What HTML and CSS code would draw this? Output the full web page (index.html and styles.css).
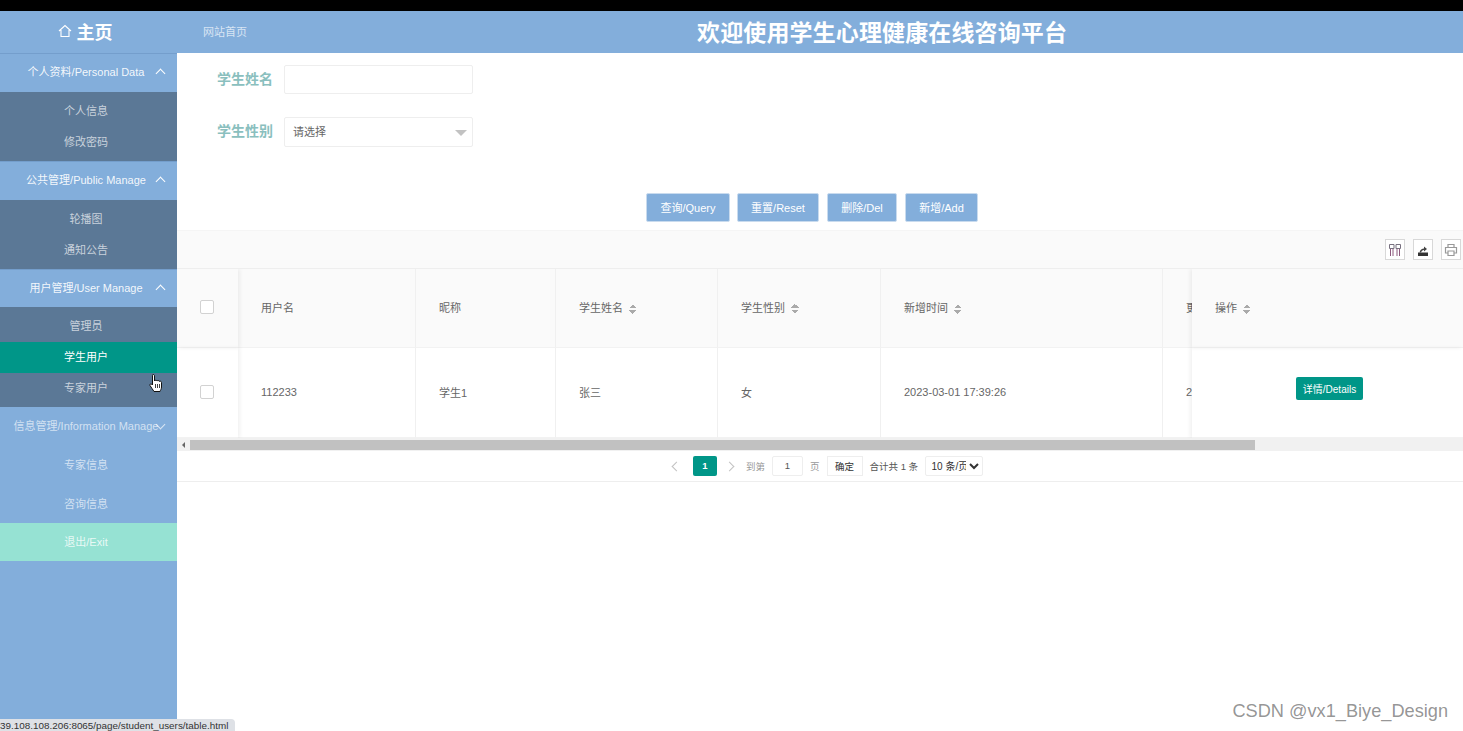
FILE: index.html
```html
<!DOCTYPE html>
<html lang="zh-CN">
<head>
    <meta charset="UTF-8">
    <title>学生心理健康在线咨询平台</title>
    <link rel="stylesheet" href="styles.css">
</head>
<body>
<div class="top-strip"></div>
<header class="header">
    <div class="logo">
        <svg class="home-icon" viewBox="0 0 14 14"><path d="M1 7 7 1.500 13 7M3 6v6.500h8V6" fill="none" stroke="#fff" stroke-width="1.100"/></svg>
        <span>主页</span>
    </div>
    <div class="crumb">网站首页</div>
    <div class="site-title">欢迎使用学生心理健康在线咨询平台</div>
</header>
<div class="main">
    <nav class="sidebar">
        <div class="nav-group">个人资料/Personal Data<span class="chevron up"></span></div>
        <div class="nav-sub">
            <div class="nav-item">个人信息</div>
            <div class="nav-item">修改密码</div>
        </div>
        <div class="nav-group">公共管理/Public Manage<span class="chevron up"></span></div>
        <div class="nav-sub">
            <div class="nav-item">轮播图</div>
            <div class="nav-item">通知公告</div>
        </div>
        <div class="nav-group short">用户管理/User Manage<span class="chevron up"></span></div>
        <div class="nav-sub tall">
            <div class="nav-item">管理员</div>
            <div class="nav-item active">学生用户</div>
            <div class="nav-item">专家用户</div>
        </div>
        <div class="nav-group dim">信息管理/Information Manage<span class="chevron down"></span></div>
        <div class="nav-plain">专家信息</div>
        <div class="nav-plain">咨询信息</div>
        <div class="nav-plain exit">退出/Exit</div>
    </nav>
    <main class="content">
        <div class="search-form">
            <div class="form-row">
                <label class="form-label">学生姓名</label>
                <div class="form-input"></div>
            </div>
            <div class="form-row">
                <label class="form-label">学生性别</label>
                <div class="form-input select-box">请选择<span class="select-arrow"></span></div>
            </div>
        </div>
        <div class="button-group">
            <button class="btn btn-query">查询/Query</button>
            <button class="btn btn-reset">重置/Reset</button>
            <button class="btn btn-del">删除/Del</button>
            <button class="btn btn-add">新增/Add</button>
        </div>
        <div class="toolbar">
            <span class="tool">
                <svg viewBox="0 0 14 14"><path d="M1.500 1.500h4.500v4H1.500zM8 1.500h4.500v4H8z" fill="none" stroke="#77707f"/><path d="M2.500 6v7M5 6v7M9 6v7M11.500 6v7" stroke="#8e5a7e"/></svg>
            </span>
            <span class="tool">
                <svg viewBox="0 0 14 14"><path d="M2 9.500h10V13H2z" fill="#333"/><path d="M3.500 9.500C4 7 6 5.500 8 5.500V3.500l3 2.500-3 2.500V7C6.500 7 5.500 8 5 9.500z" fill="#444"/></svg>
            </span>
            <span class="tool">
                <svg viewBox="0 0 14 14"><path d="M4 4V1.500h6V4M4 10H1.500V4.500h11V10H10M4 8h6v4.500H4z" fill="none" stroke="#999" stroke-width="1.200"/></svg>
            </span>
        </div>
        <div class="table-wrap">
            <table class="data-table">
                <colgroup>
                    <col class="col-check"><col class="col-user"><col class="col-nick"><col class="col-name">
                    <col class="col-sex"><col class="col-time"><col class="col-cut"><col class="col-op">
                </colgroup>
                <thead>
                <tr>
                    <th class="fixed-left"><span class="check"></span></th>
                    <th>用户名</th>
                    <th>昵称</th>
                    <th>学生姓名<span class="sort"></span></th>
                    <th>学生性别<span class="sort"></span></th>
                    <th>新增时间<span class="sort"></span></th>
                    <th class="cut">更新时间</th>
                    <th class="fixed-right">操作<span class="sort"></span></th>
                </tr>
                </thead>
                <tbody>
                <tr>
                    <td class="fixed-left"><span class="check"></span></td>
                    <td>112233</td>
                    <td>学生1</td>
                    <td>张三</td>
                    <td>女</td>
                    <td>2023-03-01 17:39:26</td>
                    <td class="cut">2023-03-01</td>
                    <td class="fixed-right op-cell"><button class="btn-detail">详情/Details</button></td>
                </tr>
                </tbody>
            </table>
        </div>
        <div class="scrollbar">
            <span class="scroll-arrow"></span>
            <div class="scroll-thumb"></div>
        </div>
        <div class="pager">
            <span class="page-chevron prev"></span>
            <span class="page-current">1</span>
            <span class="page-chevron next"></span>
            <span class="page-text">到第</span>
            <span class="page-input">1</span>
            <span class="page-text">页</span>
            <span class="page-ok">确定</span>
            <span class="page-total">合计共 1 条</span>
            <select class="page-size"><option>10 条/页</option></select>
        </div>
    </main>
</div>
<svg class="hand-cursor" viewBox="0 0 14 20">
    <path d="M4 1.500c1 0 1.500.5 1.500 1.500v5c.5-1 2-1 2.500 0 .6-.8 2-.7 2.300.4.700-.5 2.200-.2 2.200 1.100v4.500c0 2-1 3-1.500 4.500H5c-1-2-3-4-4-6-.5-1.200.7-2 1.800-1.200l.7.700V3c0-1 0-1.500.5-1.500z" fill="#fff" stroke="#111"/>
    <path d="M6.500 11v4M8.500 11v4M10.500 11v4" stroke="#111" stroke-width=".8"/>
</svg>
<div class="status-bar">39.108.108.206:8065/page/student_users/table.html</div>
<div class="watermark">CSDN @vx1_Biye_Design</div>
</body>
</html>
```

FILE: styles.css
```css
* {
    box-sizing: border-box;
}
html, body {
    height: 100%;
}
body {
    margin: 0;
    height: 731px;
    overflow: hidden;
    display: flex;
    flex-direction: column;
    font-family: "Liberation Sans", "Noto Sans CJK SC", sans-serif;
    font-size: 11px;
    color: #666;
    background: #fff;
}
.top-strip {
    height: 11px;
    background: #000;
    flex: none;
}
.header {
    height: 42px;
    flex: none;
    display: flex;
    align-items: center;
    padding-bottom: 3px;
    background: #83aedb;
    color: #fff;
}
.logo {
    width: 177px;
    display: flex;
    align-items: center;
    justify-content: center;
    gap: 5px;
    font-size: 18px;
    font-weight: bold;
    padding-right: 7px;
}
.home-icon {
    width: 14px;
    height: 14px;
}
.crumb {
    width: 520px;
    padding-left: 26px;
    color: rgba(255, 255, 255, .7);
}
.site-title {
    font-size: 23px;
    letter-spacing: .13px;
    font-weight: bold;
    white-space: nowrap;
}
.main {
    flex: 1;
    display: flex;
    min-height: 0;
}
.sidebar {
    width: 177px;
    flex: none;
    background: #83aedb;
    color: #fff;
}
.nav-group {
    position: relative;
    height: 39px;
    line-height: 39px;
    padding-right: 5px;
    text-align: center;
    white-space: nowrap;
    color: rgba(255, 255, 255, .92);
    box-shadow: inset 0 1px 0 rgba(70, 110, 160, .25);
}
.nav-group.short {
    height: 38px;
}
.nav-group.dim {
    color: rgba(255, 255, 255, .65);
    box-shadow: none;
}
.chevron {
    position: absolute;
    right: 13px;
    width: 7px;
    height: 7px;
    border: solid #fff;
    border-width: 1px 0 0 1px;
}
.chevron.up {
    top: 17px;
    transform: rotate(45deg);
}
.chevron.down {
    right: 13px;
    top: 14px;
    transform: rotate(225deg);
    opacity: .7;
}
.nav-sub {
    height: 69px;
    background: #5b7896;
    color: #c9d2dc;
    padding-top: 4px;
}
.nav-sub.tall {
    height: 100px;
}
.nav-item {
    height: 31px;
    line-height: 31px;
    padding-right: 5px;
    text-align: center;
}
.nav-item.active {
    background: #009688;
    color: #fff;
}
.nav-plain {
    height: 38.500px;
    line-height: 38px;
    padding-right: 5px;
    text-align: center;
    color: rgba(255, 255, 255, .65);
}
.nav-plain.exit {
    background: #96e2d3;
    color: rgba(255, 255, 255, .8);
    height: 38px;
}
.content {
    flex: 1;
    min-width: 0;
}
.search-form {
    height: 140px;
    padding-top: 12px;
}
.form-row {
    display: flex;
    align-items: center;
    margin-bottom: 23px;
}
.form-label {
    width: 107px;
    padding: 0 11px 4px 0;
    text-align: right;
    font-size: 14px;
    font-weight: bold;
    color: #8abfbe;
}
.form-input {
    width: 189px;
    height: 29px;
    border: 1px solid #eee;
    border-radius: 2px;
}
.select-box {
    position: relative;
    height: 30px;
    line-height: 28px;
    padding-left: 8px;
    color: #666;
}
.select-arrow {
    position: absolute;
    right: 5px;
    top: 12px;
    border: 6px solid transparent;
    border-top-color: #c2c2c2;
    border-bottom: 0;
}
.button-group {
    display: flex;
    justify-content: center;
    gap: 8px;
    padding-right: 16px;
    height: 29px;
    margin-bottom: 8px;
}
.btn {
    height: 29px;
    padding: 0 0 2px;
    border: 1px solid #c9dbee;
    border-radius: 2px;
    background: #83aedb;
    color: #fff;
    font: inherit;
}
.btn-query {
    width: 84px;
    margin-right: -1px;
}
.btn-reset { width: 82px; }
.btn-del { width: 70px; }
.btn-add { width: 73px; }
.toolbar {
    height: 39px;
    display: flex;
    justify-content: flex-end;
    align-items: center;
    gap: 8px;
    padding-right: 2px;
    background: #fafafa;
    border-top: 1px solid #f5f5f5;
    border-bottom: 1px solid #eee;
}
.tool {
    width: 20px;
    height: 21px;
    border: 1px solid #d8d8d8;
    display: flex;
    align-items: center;
    justify-content: center;
    background: #fff;
}
.tool svg {
    width: 14px;
    height: 14px;
}
.table-wrap {
    overflow: hidden;
}
.data-table {
    width: 1286px;
    table-layout: fixed;
    border-collapse: separate;
    border-spacing: 0;
}
.col-check { width: 61px; }
.col-user { width: 178px; }
.col-nick { width: 140px; }
.col-name { width: 162px; }
.col-sex { width: 163px; }
.col-time { width: 282px; }
.col-cut { width: 29px; }
.col-op { width: 271px; }
.data-table th,
.data-table td {
    padding: 0 0 0 23px;
    text-align: left;
    font-weight: normal;
    white-space: nowrap;
    overflow: hidden;
    border-right: 1px solid #f0f0f0;
    border-bottom: 1px solid #f2f2f2;
}
.data-table th {
    height: 79px;
    padding-bottom: 3px;
    background: #fafafa;
}
.data-table td {
    height: 90px;
    padding-bottom: 2px;
}
.data-table .fixed-left {
    position: relative;
    z-index: 1;
    padding-left: 23px;
    box-shadow: 2px 0 4px rgba(0, 0, 0, .06);
    border-right: 0;
}
.data-table .fixed-right {
    position: relative;
    z-index: 1;
    border-right: 0;
    box-shadow: -2px 0 4px rgba(0, 0, 0, .06);
}
.data-table .cut {
    padding-left: 23px;
    border-right: 0;
}
.check {
    display: block;
    width: 14px;
    height: 14px;
    border: 1px solid #d2d2d2;
    border-radius: 2px;
    background: #fff;
}
.sort {
    display: inline-block;
    vertical-align: middle;
    width: 8px;
    height: 10px;
    margin-left: 6px;
    background:
        linear-gradient(to top left, #aaa 50%, transparent 50%) 0 0 / 4px 4px no-repeat,
        linear-gradient(to top right, #aaa 50%, transparent 50%) 4px 0 / 4px 4px no-repeat,
        linear-gradient(to bottom left, #aaa 50%, transparent 50%) 0 6px / 4px 4px no-repeat,
        linear-gradient(to bottom right, #aaa 50%, transparent 50%) 4px 6px / 4px 4px no-repeat;
}
.data-table .op-cell {
    padding: 0 0 9px 104px;
}
.btn-detail {
    display: block;
    width: 67px;
    height: 23px;
    padding: 0;
    border: 0;
    border-radius: 2px;
    background: #009688;
    color: #fff;
    font: 10px "Liberation Sans", "Noto Sans CJK SC", sans-serif;
}
.scrollbar {
    position: relative;
    height: 13px;
    padding: 2px 0 0 13px;
    background: #f1f1f1;
}
.scroll-arrow {
    position: absolute;
    left: 5px;
    top: 4px;
    border: 3px solid transparent;
    border-right: 3px solid #666;
    border-left: 0;
}
.scroll-thumb {
    width: 1065px;
    height: 10px;
    background: #c1c1c1;
}
.pager {
    height: 31px;
    display: flex;
    align-items: center;
    padding-left: 496px;
    border-bottom: 1px solid #eee;
    font-size: 9.500px;
    color: #999;
}
.page-chevron {
    flex: none;
    width: 7px;
    height: 7px;
    border: solid #c2c2c2;
    border-width: 1px 0 0 1px;
}
.page-chevron.prev {
    transform: rotate(-45deg);
    margin-right: 13px;
}
.page-chevron.next {
    transform: rotate(135deg);
    margin: 0 13px 0 5px;
}
.page-current {
    width: 24px;
    height: 20px;
    line-height: 20px;
    text-align: center;
    font-weight: bold;
    color: #fff;
    background: #009688;
    border-radius: 2px;
    margin-right: 4px;
}
.page-text {
    margin-right: 7px;
}
.page-input {
    width: 31px;
    height: 20px;
    line-height: 18px;
    margin-right: 7px;
    text-align: center;
    border: 1px solid #eee;
    border-radius: 2px;
    color: #555;
}
.page-ok {
    width: 36px;
    height: 20px;
    line-height: 19px;
    text-align: center;
    margin-right: 7px;
    border: 1px solid #eee;
    color: #333;
}
.page-total {
    width: 55px;
    color: #555;
}
.page-size {
    width: 58px;
    height: 20px;
    padding: 0 0 0 2px;
    background: #fff;
    border: 1px solid #eee;
    border-radius: 2px;
    font: 10px "Liberation Sans", "Noto Sans CJK SC", sans-serif;
    color: #333;
}
.hand-cursor {
    position: absolute;
    left: 149px;
    top: 373px;
    width: 14px;
    height: 20px;
}
.status-bar {
    position: absolute;
    left: 0;
    bottom: 0;
    width: 235px;
    height: 12px;
    line-height: 13px;
    overflow: hidden;
    white-space: nowrap;
    background: #dee1e6;
    border-radius: 0 4px 0 0;
    font-size: 9.900px;
    color: #333;
}
.watermark {
    position: absolute;
    right: 15px;
    top: 700px;
    font-size: 18.200px;
    line-height: 22px;
    color: rgba(90, 90, 90, .65);
    white-space: nowrap;
}
```
